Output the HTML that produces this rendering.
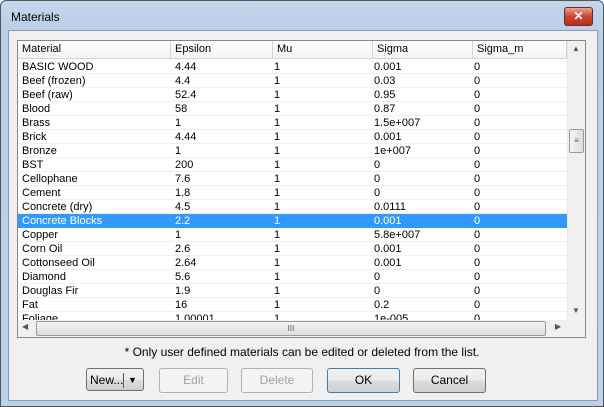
<!DOCTYPE html><html><head><style>
body{margin:0;width:604px;height:407px;overflow:hidden;font-family:"Liberation Sans",sans-serif;font-size:11px;background:#fff}
.win{position:absolute;left:0;top:0;width:602px;height:405px;border:1px solid #555;border-radius:6px 6px 0 0;background:linear-gradient(#c4d6ec,#b9cfe8 30px,#bcd2ea)}
.title{position:absolute;left:10px;top:9px;font-size:12px;color:#000}
.close{position:absolute;left:563px;top:6px;width:27px;height:17px;border:1px solid #6b2a23;border-radius:3px;background:linear-gradient(#e8a493,#c9452f 50%,#b8301c);color:#fff;font-weight:bold;text-align:center;line-height:17px;font-size:12px}
.client{position:absolute;left:7px;top:29px;width:588px;height:369px;background:#f0f0f0;border:1px solid #8a9cb4}
.list{position:absolute;left:17px;top:40px;width:567px;height:296px;border:1px solid #828790;background:#fff;overflow:hidden}
.hdr{position:absolute;left:0;top:0;width:549px;height:17px;background:linear-gradient(#fff,#f3f3f3);border-bottom:1px solid #d5d5d5}
.hdr div{position:absolute;top:0;height:17px;line-height:17px;border-right:1px solid #d5d5d5;padding-left:4px;box-sizing:border-box}
.row{position:absolute;left:0;width:549px;height:14px;line-height:14px;border-bottom:1px solid #f0f0f0;box-sizing:border-box}
.row span{position:absolute;top:0}
.sel{background:#3399ff;color:#fff;border-color:#3399ff}
.vs{position:absolute;left:549px;top:0;width:17px;height:279px;background:#f0f0f0;border-left:1px solid #e6e6e6}
.hs{position:absolute;left:0;top:279px;width:549px;height:17px;background:#f0f0f0}
.btn{position:absolute;top:368px;height:23px;border:1px solid #707070;border-radius:3px;background:linear-gradient(#f2f2f2,#ebebeb 50%,#dddddd 50%,#cfcfcf);text-align:center;line-height:23px;font-size:12px}
.dis{color:#a0a0a0;border-color:#adb2b5;background:#f4f4f4}
</style></head><body>
<div class="win">
<div class="title">Materials</div>
<div class="close">✕</div>
<div class="client"></div>
</div>
<div class="list">
<div class="hdr">
<div style="left:0;width:153px">Material</div>
<div style="left:153px;width:102px">Epsilon</div>
<div style="left:255px;width:100px">Mu</div>
<div style="left:355px;width:100px">Sigma</div>
<div style="left:455px;width:94px">Sigma_m</div>
</div>
<div id="rows"></div>
<div class="vs">
<div style="position:absolute;left:4px;top:3px;font-size:8px;color:#555">▲</div>
<div style="position:absolute;left:1px;top:88px;width:13px;height:22px;border:1px solid #999;border-radius:2px;background:linear-gradient(90deg,#f5f5f5,#dcdcdc);font-size:8px;text-align:center;line-height:22px;color:#555">≡</div>
<div style="position:absolute;left:4px;top:265px;font-size:8px;color:#555">▼</div>
</div>
<div class="hs">
<div style="position:absolute;left:4px;top:2px;font-size:8px;color:#555">◀</div>
<div style="position:absolute;left:18px;top:1px;width:508px;height:13px;border:1px solid #999;border-radius:2px;background:linear-gradient(#f5f5f5,#dcdcdc);font-size:8px;text-align:center;line-height:13px;color:#555">III</div>
<div style="position:absolute;left:537px;top:2px;font-size:8px;color:#555">▶</div>
</div>
<div style="position:absolute;left:549px;top:279px;width:18px;height:17px;background:#f0f0f0"></div>
</div>
<div style="position:absolute;left:0;width:604px;top:345px;text-align:center;font-size:12px">* Only user defined materials can be edited or deleted from the list.</div>
<div class="btn" style="left:86px;width:58px;text-align:left;padding-left:3px;box-sizing:border-box;">New...<span style="position:absolute;left:36px;top:4px;height:15px;border-left:1px solid #555"></span><span style="position:absolute;left:41px;top:0;font-size:9px">▼</span></div>
<div class="btn dis" style="left:159px;width:67px">Edit</div>
<div class="btn dis" style="left:241px;width:70px">Delete</div>
<div class="btn" style="left:327px;width:71px;border-color:#3c7fb1">OK</div>
<div class="btn" style="left:413px;width:71px">Cancel</div>
<script>
var d=[["BASIC WOOD","4.44","1","0.001","0"],["Beef (frozen)","4.4","1","0.03","0"],["Beef (raw)","52.4","1","0.95","0"],["Blood","58","1","0.87","0"],["Brass","1","1","1.5e+007","0"],["Brick","4.44","1","0.001","0"],["Bronze","1","1","1e+007","0"],["BST","200","1","0","0"],["Cellophane","7.6","1","0","0"],["Cement","1.8","1","0","0"],["Concrete (dry)","4.5","1","0.0111","0"],["Concrete Blocks","2.2","1","0.001","0"],["Copper","1","1","5.8e+007","0"],["Corn Oil","2.6","1","0.001","0"],["Cottonseed Oil","2.64","1","0.001","0"],["Diamond","5.6","1","0","0"],["Douglas Fir","1.9","1","0","0"],["Fat","16","1","0.2","0"],["Foliage","1.00001","1","1e-005","0"]];
var x=[4,157,256,356,456],h="";
d.forEach(function(r,i){h+='<div class="row'+(i==11?' sel':'')+'" style="top:'+(19+i*14)+'px">';r.forEach(function(c,j){h+='<span style="left:'+x[j]+'px">'+c+'</span>'});h+='</div>'});
document.getElementById('rows').innerHTML=h;
</script>
</body></html>
